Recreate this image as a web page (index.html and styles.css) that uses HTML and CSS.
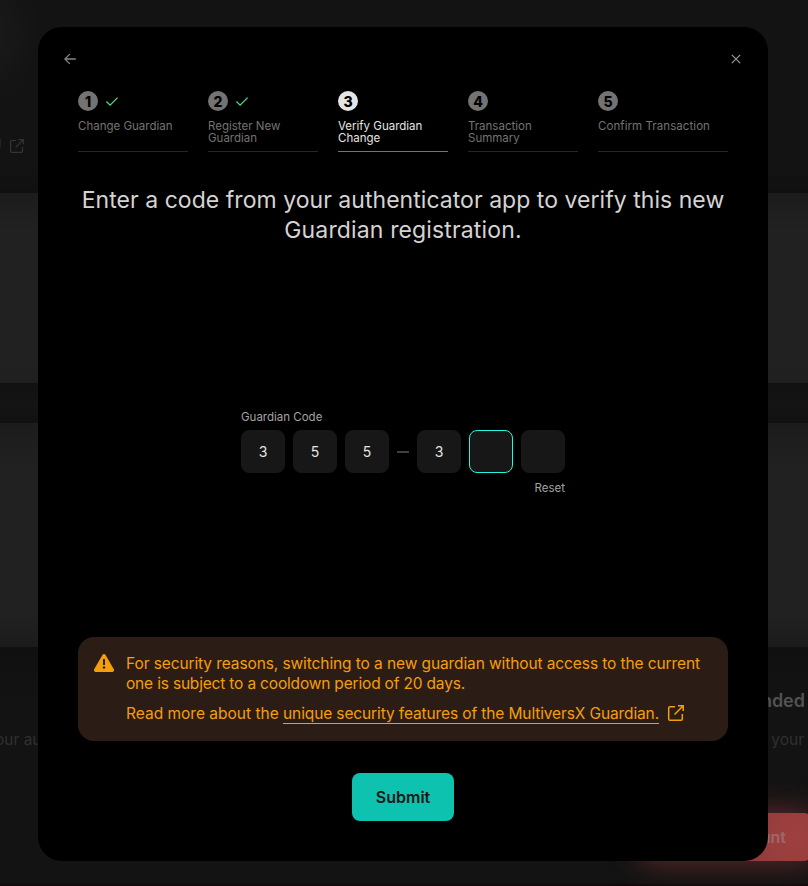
FILE: index.html
```
<!DOCTYPE html>
<html lang="en">
<head>
<meta charset="utf-8">
<title>Change Guardian</title>
<link rel="stylesheet" href="styles.css">
</head>
<body>
<div class="page">
  <div class="band band-top">
    <span class="address">U</span>
    <svg class="page-link" viewBox="0 0 16 16"><path d="M7 1.700H2A1.300 1.300 0 0 0 .7 3v11A1.300 1.300 0 0 0 2 15.300h11a1.300 1.300 0 0 0 1.300-1.300V9M6.500 9.500 15 1M10 .8h5.200V6"/></svg>
  </div>
  <div class="band band-card"></div>
  <div class="band band-gap"></div>
  <div class="band band-card-tall"></div>
  <div class="band band-bottom">
    <div class="page-title">Recommended</div>
    <div class="page-row"><span class="copy-left">our authenticator</span><span class="copy-right">your</span></div>
    <div class="page-button">Guard Account</div>
  </div>
</div>
<main class="modal">
  <header class="modal-head">
    <svg class="icon-back" viewBox="0 0 14 14"><path d="M13.800 7H1.300M6.800 1.300 1.100 7l5.700 5.700"/></svg>
    <svg class="icon-close" viewBox="0 0 10 10"><path d="M.8.8l8.400 8.400M9.200.8.8 9.200"/></svg>
  </header>
  <ol class="steps">
    <li class="step"><div class="marker"><b><span>1</span></b><svg class="check" viewBox="0 0 14 10"><path d="M.5 5 4.800 9.200 13.500.5"/></svg></div><p>Change Guardian</p></li>
    <li class="step"><div class="marker"><b><span>2</span></b><svg class="check" viewBox="0 0 14 10"><path d="M.5 5 4.800 9.200 13.500.5"/></svg></div><p>Register New<br>Guardian</p></li>
    <li class="step active"><div class="marker"><b><span>3</span></b></div><p>Verify Guardian<br>Change</p></li>
    <li class="step"><div class="marker"><b><span>4</span></b></div><p>Transaction<br>Summary</p></li>
    <li class="step last"><div class="marker"><b><span>5</span></b></div><p>Confirm Transaction</p></li>
  </ol>
  <h1><span class="h-a">Enter a code from your authenticator app to verify this new</span><br><span class="h-b">Guardian registration.</span></h1>
  <section class="code">
    <label>Guardian Code</label>
    <div class="cells">
      <div class="cell">3</div><div class="cell">5</div><div class="cell">5</div>
      <i class="dash"></i>
      <div class="cell">3</div><div class="cell focused"></div><div class="cell"></div>
    </div>
    <a class="reset">Reset</a>
  </section>
  <section class="notice">
    <svg class="warn" viewBox="0 0 20 18"><path d="M10 0c.6 0 1.100.3 1.400.8l8.300 14.300c.8 1.300.1 2.900-1.500 2.900H1.800C.2 18-.5 16.400.3 15.100L8.600.8C8.900.3 9.400 0 10 0Z"/><path class="mark" d="M9 5h2v6H9zM10 12.300a1.250 1.250 0 1 1 0 2.500 1.250 1.250 0 0 1 0-2.500Z"/></svg>
    <div class="notice-text">
      <p><span class="n-a">For security reasons, switching to a new guardian without access to the current</span><br><span class="n-b">one is subject to a cooldown period of 20 days.</span></p>
      <p class="more"><span>Read more about the <a>unique security features of the MultiversX Guardian.</a></span><svg class="ext" viewBox="0 0 16 16"><path d="M7 1.700H2A1.300 1.300 0 0 0 .7 3v11A1.300 1.300 0 0 0 2 15.300h11a1.300 1.300 0 0 0 1.300-1.300V9M6.500 9.500 15 1M10 .8h5.200V6"/></svg></p>
    </div>
  </section>
  <button class="submit">Submit</button>
</main>
</body>
</html>
```
FILE: styles.css
```
* { box-sizing: border-box; }
body { margin: 0; background: #131313; font-family: Inter, "Liberation Sans", sans-serif; overflow: hidden; }
p, h1, ol { margin: 0; padding: 0; }
svg { display: block; fill: none; stroke: currentColor; flex: none; overflow: visible; }
.page { width: 808px; height: 886px; overflow: hidden; display: flex; flex-direction: column; }
.band { flex: none; }
.band-top { height: 193px; padding-top: 138px; display: flex; align-items: flex-start; background: radial-gradient(circle at -35px 35px, #1e1e1e, transparent 75px), linear-gradient(#131313 85%, #101010); color: #454545; }
.address { width: 12px; margin-left: -9px; font-size: 14px; line-height: 14px; }
.page-link { width: 14px; height: 14px; margin: 1px 0 0 7px; stroke-width: 1.400; color: #353535; }
.band-card { height: 190px; background: linear-gradient(#1c1c1c, #212121 20%, #212121 85%, #1f1f1f); }
.band-gap { height: 40px; background: linear-gradient(#111, #141414, #111); }
.band-card-tall { height: 224px; background: linear-gradient(#1c1c1c, #212121 20%, #212121 85%, #1b1b1b); }
.band-bottom { height: 239px; padding-top: 42px; background: linear-gradient(#101010, #131313 25%); border-bottom: 2px solid #110a10; }
.page-title { font-size: 18px; font-weight: 600; line-height: 24px; color: #525252; text-align: right; padding-right: 3px; }
.page-row { display: flex; justify-content: space-between; margin-top: 17px; font-size: 15.500px; line-height: 20px; color: #303030; }
.copy-left { margin-left: -5px; }
.copy-right { padding-right: 4px; }
.page-button { width: 170px; height: 48px; margin: 63px 0 0 642px; padding-right: 26px; border-radius: 8px; background: radial-gradient(circle at 90% 50%, #a04040, #843535 65%); box-shadow: 0 0 30px 2px #602b2b; color: #9d6969; font-size: 16px; font-weight: 600; line-height: 48px; text-align: right; }
.modal { position: absolute; left: 38px; top: 27px; width: 730px; height: 834px; padding: 26px 40px 40px; border-radius: 24px; background: #000; display: flex; flex-direction: column; }
.modal-head { height: 12px; margin: 0 -14px; display: flex; justify-content: space-between; align-items: center; color: #858585; }
.icon-back { width: 12px; height: 12px; stroke-width: 1.5; }
.icon-close { width: 10px; height: 10px; margin-right: 1px; stroke-width: 1.2; color: #999; }
.steps { list-style: none; display: flex; gap: 20px; height: 62px; margin-top: 26px; }
.step { width: 110px; border-bottom: 1px solid #262626; color: #737373; }
.step.last { width: 130px; }
.step.active { color: #e5e5e5; border-color: #737373; }
.marker { display: flex; align-items: center; gap: 8px; height: 20px; }
.marker b { width: 20px; height: 20px; border-radius: 50%; background: currentColor; font-size: 14px; line-height: 22px; font-weight: 800; text-align: center; }
.marker span { color: #000; }
.check { width: 12px; height: 9px; stroke-width: 1.5; color: #4ade80; }
.step p { margin-top: 9px; font-size: 11.500px; line-height: 12px; white-space: nowrap; }
.step.last p { letter-spacing: .07px; }
h1 { margin-top: 33px; font-size: 23px; line-height: 30px; font-weight: 400; color: #d4d4d4; text-align: center; white-space: nowrap; }
.h-a { letter-spacing: .04px; }
.h-b { letter-spacing: .14px; }
.code { width: 324px; margin: 166px auto 0; display: flex; flex-direction: column; color: #a3a3a3; font-size: 11.500px; line-height: 12px; }
.cells { display: flex; align-items: center; gap: 8px; margin-top: 7px; }
.cell { width: 44px; height: 43px; border-radius: 8px; background: #171717; border: 1px solid #171717; color: #e5e5e5; font-size: 14px; line-height: 41px; text-align: center; }
.cell.focused { border-color: #23f7dd; }
.dash { width: 12px; height: 2px; background: #404040; }
.reset { align-self: flex-end; margin-top: 9px; }
.notice { margin-top: 143px; height: 104px; padding: 17px 16px; border-radius: 16px; background: #2b1d15; color: #f59e0b; display: flex; gap: 12px; }
.warn { width: 20px; height: 18px; fill: currentColor; stroke: none; }
.warn .mark { fill: #2b1d15; }
.notice-text { font-size: 15.500px; line-height: 20px; white-space: nowrap; }
.n-a { letter-spacing: -.1px; }
.n-b { letter-spacing: -.18px; }
.more { display: flex; margin-top: 10px; }
.more a { border-bottom: 1px solid; letter-spacing: -.12px; }
.ext { width: 16px; height: 16px; margin: 1px 0 0 8.500px; stroke-width: 1.500; }
.submit { width: 102px; height: 48px; margin: 32px auto 0; border: 0; border-radius: 8px; background: #0dc2ae; color: #171717; font: 600 16px/48px Inter, sans-serif; padding: 0; }
```
